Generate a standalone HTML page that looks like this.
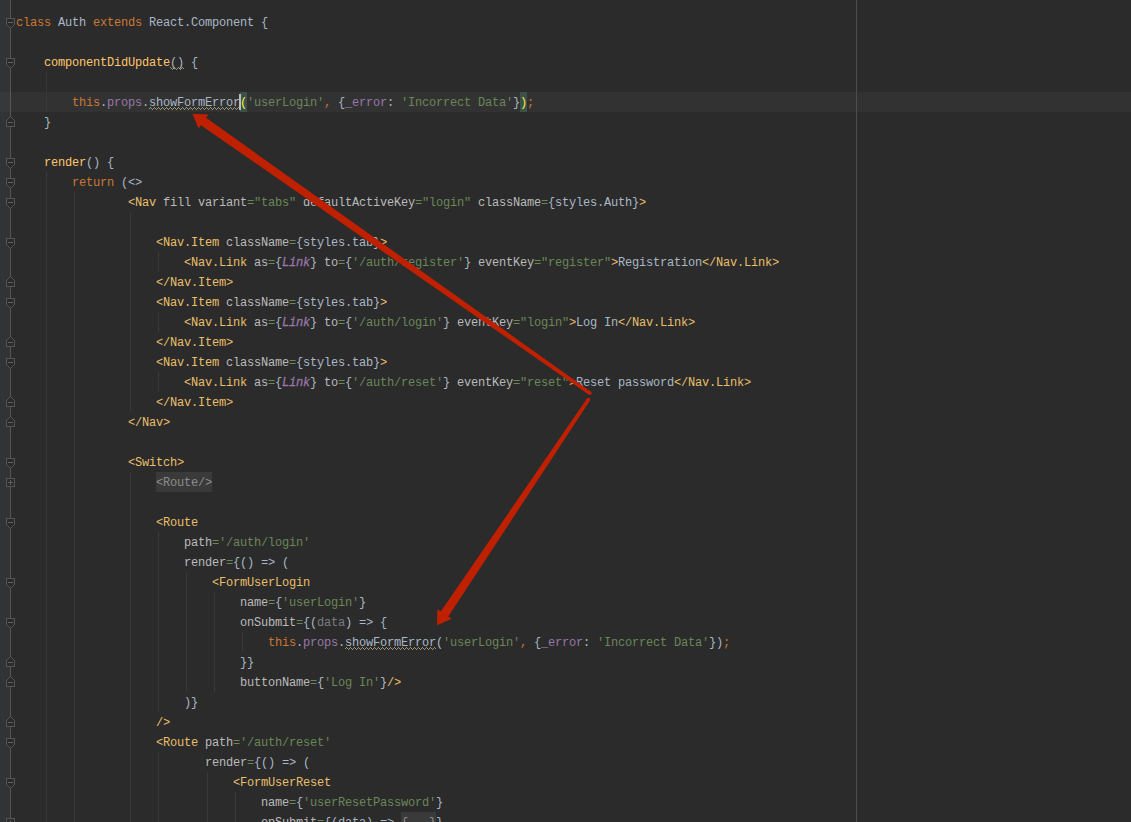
<!DOCTYPE html>
<html><head><meta charset="utf-8"><title>Auth.js</title>
<style>
html,body{margin:0;padding:0;background:#2b2b2b;}
body{width:1131px;height:822px;overflow:hidden;position:relative;font-family:"Liberation Mono","DejaVu Sans Mono",monospace;font-size:12px;letter-spacing:-0.2012px;color:#a9b7c6;}
#gut{position:absolute;left:0;top:0;width:10px;height:822px;background:#313335;}
#gl{position:absolute;left:10px;top:0;width:1px;height:822px;background:#555555;}
#cur{position:absolute;left:11px;top:92px;width:1120px;height:20px;background:#323232;}
#curg{position:absolute;left:0;top:92px;width:10px;height:20px;background:#36383a;}
#rm{position:absolute;left:856px;top:0;width:1px;height:822px;background:#4d4d4d;}
.l{position:absolute;height:20px;line-height:20px;white-space:pre;}
.k{color:#cc7832}.d{color:#a9b7c6}.f{color:#ffc66d}.s{color:#6a8759}.p{color:#9876aa}
.t{color:#e8bf6a}.a{color:#bababa}.e{color:#6a8759}.i{color:#9876aa;font-style:italic;-webkit-text-stroke:0.3px #9876aa}
.pa{color:#797b80}
.g{color:#8c8c8c}
.m{color:#ffef28}
.bg{position:absolute;height:20px}
.w,.w2{position:relative}
.ig{position:absolute;width:1px;background:#393939;}
svg{position:absolute;left:0;top:0;}
</style></head><body>
<div id="gut"></div><div id="curg"></div><div id="cur"></div><div id="gl"></div><div id="rm"></div>
<div class="ig" style="left:46px;top:72px;height:40px"></div><div class="ig" style="left:46px;top:172px;height:660px"></div><div class="ig" style="left:74px;top:192px;height:640px"></div><div class="ig" style="left:130px;top:212px;height:200px"></div><div class="ig" style="left:158px;top:252px;height:20px"></div><div class="ig" style="left:158px;top:312px;height:20px"></div><div class="ig" style="left:158px;top:372px;height:20px"></div><div class="ig" style="left:130px;top:472px;height:360px"></div><div class="ig" style="left:158px;top:532px;height:180px"></div><div class="ig" style="left:186px;top:572px;height:120px"></div><div class="ig" style="left:214px;top:592px;height:100px"></div><div class="ig" style="left:242px;top:632px;height:20px"></div><div class="ig" style="left:158px;top:752px;height:80px"></div><div class="ig" style="left:207px;top:772px;height:60px"></div><div class="ig" style="left:235px;top:792px;height:40px"></div>
<div class="l" style="left:16px;top:13px"><span class="k">class </span><span class="d">Auth </span><span class="k">extends </span><span class="d">React.Component {</span></div>
<div class="l" style="left:44px;top:53px"><span class="f">componentDidUpdate</span><span class="w2">()</span><span class="d"> {</span></div>
<div class="bg" style="left:240px;top:92px;width:7px;background:#3b514d"></div><div class="bg" style="left:520px;top:92px;width:7px;background:#3b514d"></div><div class="l" style="left:72px;top:93px"><span class="k">this</span><span class="d">.</span><span class="p">props</span><span class="d">.</span><span class="w">showFormError</span><span class="m">(</span><span class="s">'userLogin'</span><span class="k">, </span><span class="d">{</span><span class="p">_error</span><span class="d">: </span><span class="s">'Incorrect Data'</span><span class="d">}</span><span class="m">)</span><span class="k">;</span></div>
<div class="l" style="left:44px;top:113px"><span class="d">}</span></div>
<div class="l" style="left:44px;top:153px"><span class="f">render</span><span class="d">() {</span></div>
<div class="l" style="left:72px;top:173px"><span class="k">return </span><span class="d">(&lt;&gt;</span></div>
<div class="l" style="left:128px;top:193px"><span class="t">&lt;Nav </span><span class="a">fill variant</span><span class="e">=</span><span class="s">"tabs"</span><span class="a"> defaultActiveKey</span><span class="e">=</span><span class="s">"login"</span><span class="a"> className</span><span class="e">=</span><span class="d">{styles.Auth}</span><span class="t">&gt;</span></div>
<div class="l" style="left:156px;top:233px"><span class="t">&lt;Nav.Item </span><span class="a">className</span><span class="e">=</span><span class="d">{styles.tab}</span><span class="t">&gt;</span></div>
<div class="l" style="left:184px;top:253px"><span class="t">&lt;Nav.Link </span><span class="a">as</span><span class="e">=</span><span class="d">{</span><span class="i">Link</span><span class="d">} </span><span class="a">to</span><span class="e">=</span><span class="d">{</span><span class="s">'/auth/register'</span><span class="d">} </span><span class="a">eventKey</span><span class="e">=</span><span class="s">"register"</span><span class="t">&gt;</span><span class="d">Registration</span><span class="t">&lt;/Nav.Link&gt;</span></div>
<div class="l" style="left:156px;top:273px"><span class="t">&lt;/Nav.Item&gt;</span></div>
<div class="l" style="left:156px;top:293px"><span class="t">&lt;Nav.Item </span><span class="a">className</span><span class="e">=</span><span class="d">{styles.tab}</span><span class="t">&gt;</span></div>
<div class="l" style="left:184px;top:313px"><span class="t">&lt;Nav.Link </span><span class="a">as</span><span class="e">=</span><span class="d">{</span><span class="i">Link</span><span class="d">} </span><span class="a">to</span><span class="e">=</span><span class="d">{</span><span class="s">'/auth/login'</span><span class="d">} </span><span class="a">eventKey</span><span class="e">=</span><span class="s">"login"</span><span class="t">&gt;</span><span class="d">Log In</span><span class="t">&lt;/Nav.Link&gt;</span></div>
<div class="l" style="left:156px;top:333px"><span class="t">&lt;/Nav.Item&gt;</span></div>
<div class="l" style="left:156px;top:353px"><span class="t">&lt;Nav.Item </span><span class="a">className</span><span class="e">=</span><span class="d">{styles.tab}</span><span class="t">&gt;</span></div>
<div class="l" style="left:184px;top:373px"><span class="t">&lt;Nav.Link </span><span class="a">as</span><span class="e">=</span><span class="d">{</span><span class="i">Link</span><span class="d">} </span><span class="a">to</span><span class="e">=</span><span class="d">{</span><span class="s">'/auth/reset'</span><span class="d">} </span><span class="a">eventKey</span><span class="e">=</span><span class="s">"reset"</span><span class="t">&gt;</span><span class="d">Reset password</span><span class="t">&lt;/Nav.Link&gt;</span></div>
<div class="l" style="left:156px;top:393px"><span class="t">&lt;/Nav.Item&gt;</span></div>
<div class="l" style="left:128px;top:413px"><span class="t">&lt;/Nav&gt;</span></div>
<div class="l" style="left:128px;top:453px"><span class="t">&lt;Switch&gt;</span></div>
<div class="bg" style="left:156px;top:472px;width:56px;background:#3a3a3a"></div><div class="l" style="left:156px;top:473px"><span class="g">&lt;Route/&gt;</span></div>
<div class="l" style="left:156px;top:513px"><span class="t">&lt;Route</span></div>
<div class="l" style="left:184px;top:533px"><span class="a">path</span><span class="e">=</span><span class="s">'/auth/login'</span></div>
<div class="l" style="left:184px;top:553px"><span class="a">render</span><span class="e">=</span><span class="d">{() =&gt; (</span></div>
<div class="l" style="left:212px;top:573px"><span class="t">&lt;FormUserLogin</span></div>
<div class="l" style="left:240px;top:593px"><span class="a">name</span><span class="e">=</span><span class="d">{</span><span class="s">'userLogin'</span><span class="d">}</span></div>
<div class="l" style="left:240px;top:613px"><span class="a">onSubmit</span><span class="e">=</span><span class="d">{(</span><span class="pa">data</span><span class="d">) =&gt; {</span></div>
<div class="l" style="left:268px;top:633px"><span class="k">this</span><span class="d">.</span><span class="p">props</span><span class="d">.</span><span class="w">showFormError</span><span class="d">(</span><span class="s">'userLogin'</span><span class="k">, </span><span class="d">{</span><span class="p">_error</span><span class="d">: </span><span class="s">'Incorrect Data'</span><span class="d">})</span><span class="k">;</span></div>
<div class="l" style="left:240px;top:653px"><span class="d">}}</span></div>
<div class="l" style="left:240px;top:673px"><span class="a">buttonName</span><span class="e">=</span><span class="d">{</span><span class="s">'Log In'</span><span class="d">}</span><span class="t">/&gt;</span></div>
<div class="l" style="left:184px;top:693px"><span class="d">)}</span></div>
<div class="l" style="left:156px;top:713px"><span class="t">/&gt;</span></div>
<div class="l" style="left:156px;top:733px"><span class="t">&lt;Route </span><span class="a">path</span><span class="e">=</span><span class="s">'/auth/reset'</span></div>
<div class="l" style="left:205px;top:753px"><span class="a">render</span><span class="e">=</span><span class="d">{() =&gt; (</span></div>
<div class="l" style="left:233px;top:773px"><span class="t">&lt;FormUserReset</span></div>
<div class="l" style="left:261px;top:793px"><span class="a">name</span><span class="e">=</span><span class="d">{</span><span class="s">'userResetPassword'</span><span class="d">}</span></div>
<div class="bg" style="left:401px;top:812px;width:35px;background:#3a3a3a"></div><div class="l" style="left:261px;top:813px"><span class="a">onSubmit</span><span class="e">=</span><span class="d">{(data) =&gt; </span><span class="g">{...}</span><span class="d">}</span></div>
<svg width="1131" height="822" viewBox="0 0 1131 822">
<defs><pattern id="wv" x="0" y="12" width="4" height="20" patternUnits="userSpaceOnUse" shape-rendering="crispEdges"><rect x="0" y="17" width="1" height="1" fill="#98956f"/><rect x="1" y="16" width="1" height="1" fill="#98956f"/><rect x="2" y="15" width="1" height="1" fill="#98956f"/><rect x="3" y="16" width="1" height="1" fill="#98956f"/></pattern></defs>
<path d="M6.5 18.5 h8 v6 l-4 4 l-4 -4 z" fill="#2b2b2b" stroke="#555" shape-rendering="crispEdges"/>
<rect x="8" y="22" width="5" height="1" fill="#5f5f5f"/>
<path d="M6.5 58.5 h8 v6 l-4 4 l-4 -4 z" fill="#2b2b2b" stroke="#555" shape-rendering="crispEdges"/>
<rect x="8" y="62" width="5" height="1" fill="#5f5f5f"/>
<path d="M6.5 126.5 h8 v-6 l-4 -4 l-4 4 z" fill="#2b2b2b" stroke="#555" shape-rendering="crispEdges"/>
<rect x="8" y="122" width="5" height="1" fill="#5f5f5f"/>
<path d="M6.5 158.5 h8 v6 l-4 4 l-4 -4 z" fill="#2b2b2b" stroke="#555" shape-rendering="crispEdges"/>
<rect x="8" y="162" width="5" height="1" fill="#5f5f5f"/>
<path d="M6.5 178.5 h8 v6 l-4 4 l-4 -4 z" fill="#2b2b2b" stroke="#555" shape-rendering="crispEdges"/>
<rect x="8" y="182" width="5" height="1" fill="#5f5f5f"/>
<path d="M6.5 198.5 h8 v6 l-4 4 l-4 -4 z" fill="#2b2b2b" stroke="#555" shape-rendering="crispEdges"/>
<rect x="8" y="202" width="5" height="1" fill="#5f5f5f"/>
<path d="M6.5 238.5 h8 v6 l-4 4 l-4 -4 z" fill="#2b2b2b" stroke="#555" shape-rendering="crispEdges"/>
<rect x="8" y="242" width="5" height="1" fill="#5f5f5f"/>
<path d="M6.5 286.5 h8 v-6 l-4 -4 l-4 4 z" fill="#2b2b2b" stroke="#555" shape-rendering="crispEdges"/>
<rect x="8" y="282" width="5" height="1" fill="#5f5f5f"/>
<path d="M6.5 298.5 h8 v6 l-4 4 l-4 -4 z" fill="#2b2b2b" stroke="#555" shape-rendering="crispEdges"/>
<rect x="8" y="302" width="5" height="1" fill="#5f5f5f"/>
<path d="M6.5 346.5 h8 v-6 l-4 -4 l-4 4 z" fill="#2b2b2b" stroke="#555" shape-rendering="crispEdges"/>
<rect x="8" y="342" width="5" height="1" fill="#5f5f5f"/>
<path d="M6.5 358.5 h8 v6 l-4 4 l-4 -4 z" fill="#2b2b2b" stroke="#555" shape-rendering="crispEdges"/>
<rect x="8" y="362" width="5" height="1" fill="#5f5f5f"/>
<path d="M6.5 406.5 h8 v-6 l-4 -4 l-4 4 z" fill="#2b2b2b" stroke="#555" shape-rendering="crispEdges"/>
<rect x="8" y="402" width="5" height="1" fill="#5f5f5f"/>
<path d="M6.5 426.5 h8 v-6 l-4 -4 l-4 4 z" fill="#2b2b2b" stroke="#555" shape-rendering="crispEdges"/>
<rect x="8" y="422" width="5" height="1" fill="#5f5f5f"/>
<path d="M6.5 458.5 h8 v6 l-4 4 l-4 -4 z" fill="#2b2b2b" stroke="#555" shape-rendering="crispEdges"/>
<rect x="8" y="462" width="5" height="1" fill="#5f5f5f"/>
<rect x="6.5" y="478.5" width="8" height="8" fill="#2b2b2b" stroke="#555"/>
<rect x="8" y="482" width="5" height="1" fill="#5f5f5f"/>
<rect x="10" y="480" width="1" height="5" fill="#5f5f5f"/>
<path d="M6.5 518.5 h8 v6 l-4 4 l-4 -4 z" fill="#2b2b2b" stroke="#555" shape-rendering="crispEdges"/>
<rect x="8" y="522" width="5" height="1" fill="#5f5f5f"/>
<path d="M6.5 578.5 h8 v6 l-4 4 l-4 -4 z" fill="#2b2b2b" stroke="#555" shape-rendering="crispEdges"/>
<rect x="8" y="582" width="5" height="1" fill="#5f5f5f"/>
<path d="M6.5 618.5 h8 v6 l-4 4 l-4 -4 z" fill="#2b2b2b" stroke="#555" shape-rendering="crispEdges"/>
<rect x="8" y="622" width="5" height="1" fill="#5f5f5f"/>
<path d="M6.5 666.5 h8 v-6 l-4 -4 l-4 4 z" fill="#2b2b2b" stroke="#555" shape-rendering="crispEdges"/>
<rect x="8" y="662" width="5" height="1" fill="#5f5f5f"/>
<path d="M6.5 686.5 h8 v-6 l-4 -4 l-4 4 z" fill="#2b2b2b" stroke="#555" shape-rendering="crispEdges"/>
<rect x="8" y="682" width="5" height="1" fill="#5f5f5f"/>
<path d="M6.5 726.5 h8 v-6 l-4 -4 l-4 4 z" fill="#2b2b2b" stroke="#555" shape-rendering="crispEdges"/>
<rect x="8" y="722" width="5" height="1" fill="#5f5f5f"/>
<path d="M6.5 738.5 h8 v6 l-4 4 l-4 -4 z" fill="#2b2b2b" stroke="#555" shape-rendering="crispEdges"/>
<rect x="8" y="742" width="5" height="1" fill="#5f5f5f"/>
<path d="M6.5 778.5 h8 v6 l-4 4 l-4 -4 z" fill="#2b2b2b" stroke="#555" shape-rendering="crispEdges"/>
<rect x="8" y="782" width="5" height="1" fill="#5f5f5f"/>
<rect x="6.5" y="818.5" width="8" height="8" fill="#2b2b2b" stroke="#555"/>
<rect x="8" y="822" width="5" height="1" fill="#5f5f5f"/>
<rect x="10" y="820" width="1" height="5" fill="#5f5f5f"/>
<rect x="149" y="107" width="91" height="3" fill="url(#wv)" shape-rendering="crispEdges"/>
<rect x="170" y="67" width="14" height="3" fill="url(#wv)" shape-rendering="crispEdges"/>
<rect x="345" y="647" width="91" height="3" fill="url(#wv)" shape-rendering="crispEdges"/>
<rect x="239" y="94" width="2" height="16" fill="#bbbbbb"/>
<polygon points="192.4,113.7 198.5,128.6 200.9,125.2 588.9,394.7 590.9,391.7 206.1,117.8 208.5,114.4" fill="#bf2000"/><circle cx="589.9" cy="393.2" r="1.80" fill="#bf2000"/>
<polygon points="437.0,625.2 451.8,618.7 448.3,616.4 590.0,400.5 587.0,398.5 440.8,611.4 437.4,609.1" fill="#bf2000"/><circle cx="588.5" cy="399.5" r="1.80" fill="#bf2000"/>
</svg>
</body></html>
